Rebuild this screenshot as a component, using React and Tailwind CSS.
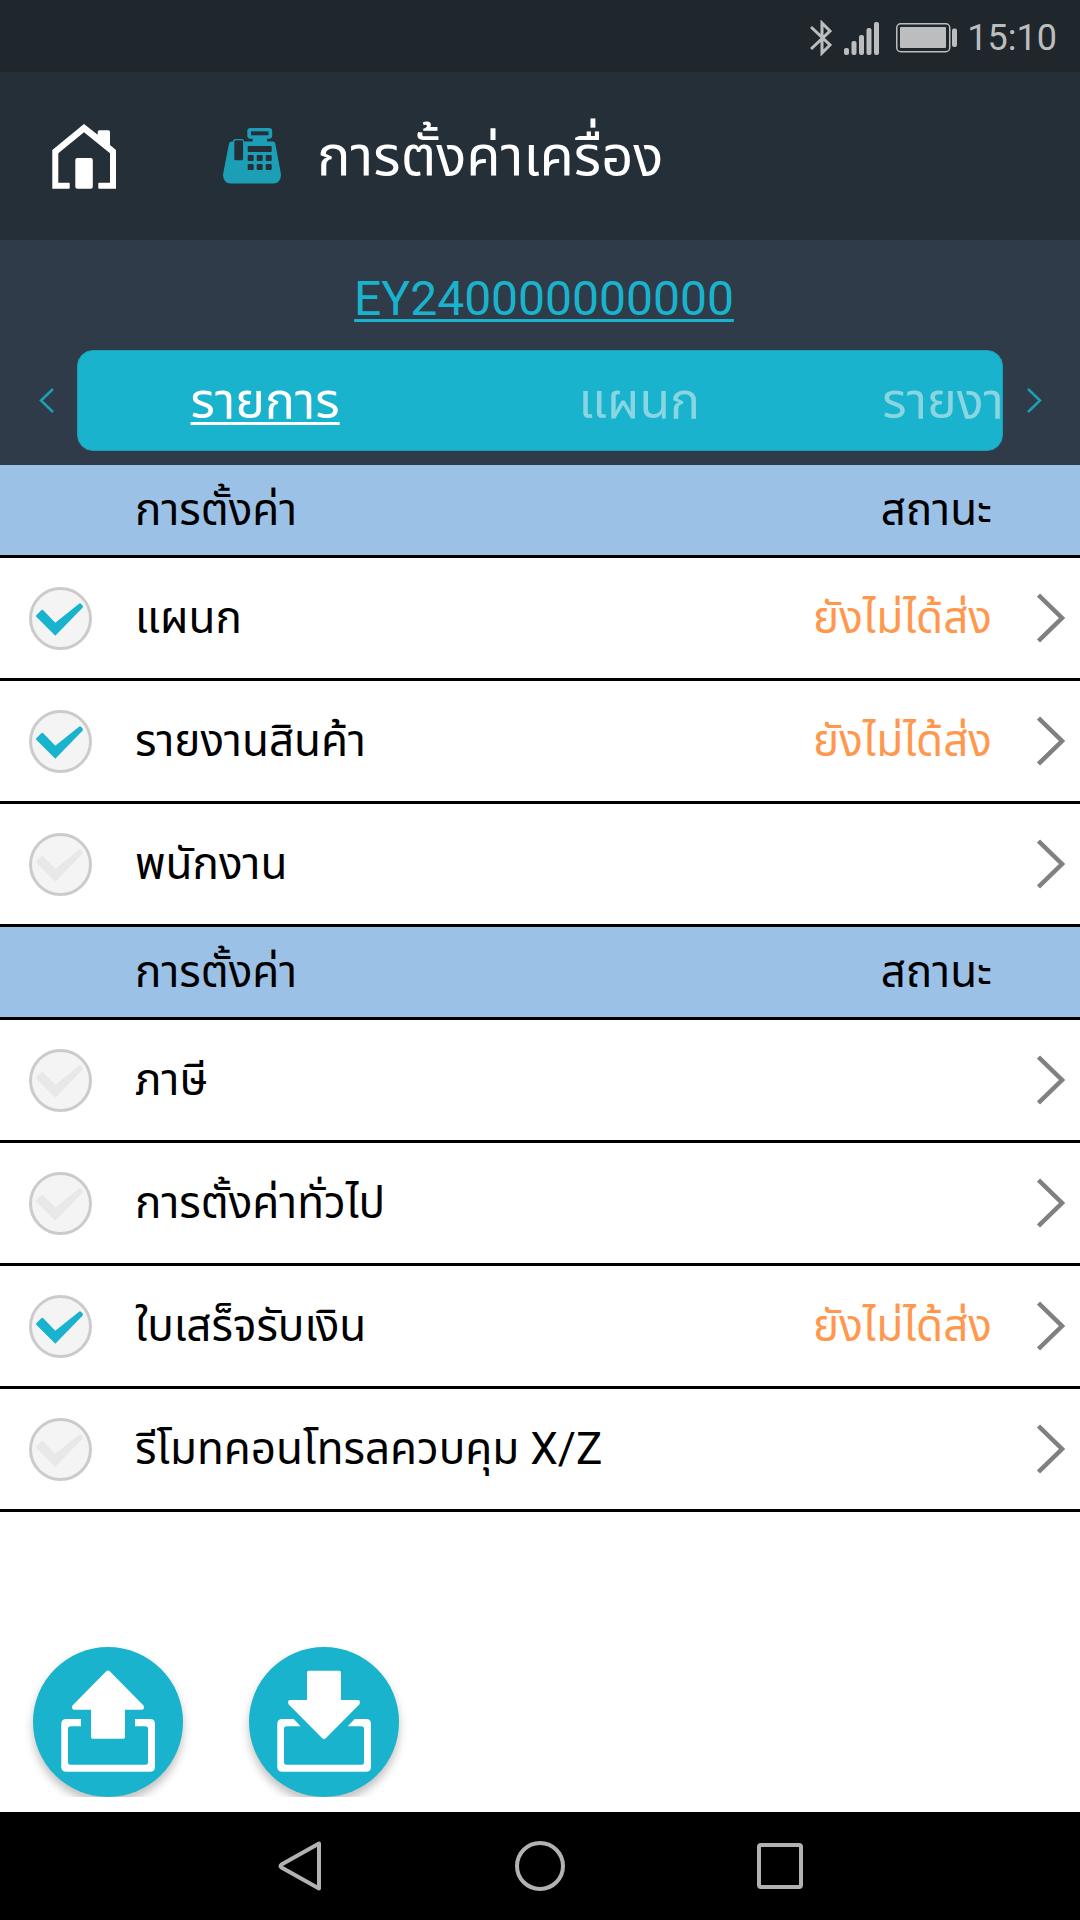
import React, { useState } from 'react';

const sections = [
    {
        id: 'menu',
        rows: [
            { id: 'department', label: 'แผนก', checked: true },
            { id: 'plu', label: 'รายงานสินค้า', checked: true },
            { id: 'clerk', label: 'พนักงาน', checked: false },
        ],
    },
    {
        id: 'system',
        rows: [
            { id: 'tax', label: 'ภาษี', checked: false },
            { id: 'general', label: 'การตั้งค่าทั่วไป', checked: false },
            { id: 'receipt', label: 'ใบเสร็จรับเงิน', checked: true },
            { id: 'remote', label: 'รีโมทคอนโทรลควบคุม X/Z', checked: false },
        ],
    },
];

const tabs = ['รายการ', 'แผนก', 'รายงานสินค้า'];


function StatusBar() {
    return (
        <div className="flex h-18 items-center justify-end bg-[#1f272d] pt-[3px] pr-[23px] text-[#bcbdbf]">
            <svg className="h-9 w-[22px]" viewBox="0 0 22 36" fill="none" stroke="currentColor" strokeWidth="3">
                <path d="M1 7l19 18-8 8V3l8 8L1 29" strokeLinejoin="miter" />
            </svg>
            <svg className="ml-3 h-9 w-9" viewBox="0 0 36 36" fill="currentColor">
                <rect x="0" y="28" width="5" height="7" rx="2" />
                <rect x="7.5" y="21" width="5" height="14" rx="2" />
                <rect x="15" y="15" width="5" height="20" rx="2" />
                <rect x="22.5" y="8" width="5" height="27" rx="2" />
                <rect x="30" y="2" width="5" height="33" rx="2" />
            </svg>
            <svg className="ml-4 h-[30px] w-[62px]" viewBox="0 0 62 30" fill="currentColor">
                <rect x="0.75" y="0.75" width="53" height="28" rx="4" fill="none" stroke="currentColor" strokeWidth="1.5" />
                <rect x="4" y="4" width="46" height="21" rx="1" />
                <rect x="56" y="5.5" width="5" height="18.5" rx="2" />
            </svg>
            <span className="ml-[9px] text-[36px] leading-none">15:10</span>
        </div>
    );
}

function HomeIcon() {
    return (
        <svg className="h-[65px] w-16" viewBox="0 0 64 65" fill="currentColor">
            <path d="M32 0L45.7 10.8V8q0-1.7 1.7-1.7H56.3q1.7 0 1.7 1.7V21L64 26V64.7H47q-.7 0-.7-.7V59.4q0-.7.7-.7H58V29.3L32 8.3 6.3 29.3V58.7H17q.7 0 .7.7V64q0 .7-.7.7H.3V26z" />
            <rect x="23.3" y="34" width="17.5" height="30.7" rx="2" />
        </svg>
    );
}

function RegisterIcon() {
    return (
        <svg className="h-14 w-[58px]" viewBox="0 0 58 56">
            <g fill="#1c9fb6">
                <path d="M9 13.5H29.7V10.7H27.5q-3.2 0-3.2-3.2V3.2q0-3.2 3.2-3.2H46q3.2 0 3.2 3.2V7.5q0 3.2-3.2 3.2H44V13.5H50q2 0 2.3 2L58 46.5q0 9-8 9H8q-8 0-8-9L6 15.5q.5-2 3-2z" />
                <rect x="10" y="11" width="11" height="10" rx="2.5" />
            </g>
            <g fill="#252f38">
                <rect x="28" y="3.3" width="17.5" height="4" />
                <rect x="11.3" y="12.3" width="8.8" height="20" rx="1.5" />
                <rect x="24.7" y="18" width="24" height="6" rx="1" />
                <rect x="24.7" y="27" width="6" height="6" rx="1" />
                <rect x="33.7" y="27" width="6" height="6" rx="1" />
                <rect x="42.7" y="27" width="6" height="6" rx="1" />
                <rect x="24.7" y="36" width="6" height="6" rx="1" />
                <rect x="33.7" y="36" width="6" height="6" rx="1" />
                <rect x="42.7" y="36" width="6" height="6" rx="1" />
            </g>
        </svg>
    );
}

function Header() {
    return (
        <header className="flex h-42 items-center bg-[#252f38] pl-13 text-white">
            <button aria-label="หน้าแรก">
                <HomeIcon />
            </button>
            <div className="ml-[107px]">
                <RegisterIcon />
            </div>
            <h1 className="ml-9 text-[56px] leading-none">การตั้งค่าเครื่อง</h1>
        </header>
    );
}

function TabBar() {
    const [active, setActive] = useState(0);

    return (
        <nav className="flex items-center text-[#1c9fb6]">
            <button aria-label="ก่อนหน้า" className="flex w-[77px] justify-center pl-4">
                <svg className="h-[25px] w-4" viewBox="0 0 16 25" fill="none" stroke="currentColor" strokeWidth="2.5">
                    <path d="M14 1L2 12.5 14 24" />
                </svg>
            </button>
            <div className="flex h-[101px] min-w-0 flex-1 overflow-hidden rounded-2xl border border-[#1c9fb6] bg-[#1ab3cd]">
                {tabs.map((tab, i) => (
                    <button
                        key={tab}
                        onClick={() => setActive(i)}
                        className={
                            i === active
                                ? 'shrink-0 basis-[40.5%] text-center text-[50px] leading-none whitespace-nowrap text-white underline decoration-3 underline-offset-4'
                                : 'shrink-0 basis-[40.5%] text-center text-[50px] leading-none whitespace-nowrap text-[#8ad5e2]'
                        }
                    >
                        {tab}
                    </button>
                ))}
            </div>
            <button aria-label="ถัดไป" className="flex w-[77px] justify-center pr-4">
                <svg className="h-[25px] w-4" viewBox="0 0 16 25" fill="none" stroke="currentColor" strokeWidth="2.5">
                    <path d="M2 1l12 11.5L2 24" />
                </svg>
            </button>
        </nav>
    );
}

function SettingRow({ row }) {
    const [checked, setChecked] = useState(row.checked);

    return (
        <tr className="h-[123px]">
            <td className="w-[135px] border-b-3 border-black pl-[29px]">
                <div className="relative h-[63px] w-[63px]">
                    <input
                        id={row.id}
                        type="checkbox"
                        checked={checked}
                        onChange={() => setChecked(!checked)}
                        className="peer block h-[63px] w-[63px] appearance-none rounded-full border-3 border-[#cbcbcb] bg-[#f4f4f4]"
                    />
                    <svg
                        className="pointer-events-none absolute inset-0 h-[63px] w-[63px] text-[#e8e8e8] peer-checked:text-[#1ab3cd]"
                        viewBox="0 0 63 63"
                        fill="currentColor"
                    >
                        <path d="M7.3 28.3L12.3 23.3q1-1 2 0L26.3 35.7 50 16.8q1.2-1 2.2.2l1.5 1.8q.8 1-.2 2L26.3 48.7 7.3 29.8q-.7-.7 0-1.5z" />
                    </svg>
                </div>
            </td>
            <td className="border-b-3 border-black">
                <label htmlFor={row.id}>{row.label}</label>
            </td>
            <td className="border-b-3 border-black text-right text-[#ff984d]">
                {checked && 'ยังไม่ได้ส่ง'}
            </td>
            <td className="w-22 border-b-3 border-black pr-[15px]">
                <button aria-label={row.label} className="ml-auto block">
                    <svg className="h-[50px] w-7" viewBox="0 0 28 50" fill="none" stroke="#808080" strokeWidth="4.5">
                        <path d="M1.5 2L25 25 1.5 48" />
                    </svg>
                </button>
            </td>
        </tr>
    );
}

function FloatingButton({ label, children }) {
    return (
        <button aria-label={label} className="h-[150px] w-[150px] rounded-full bg-[#1ab3cd] shadow-[0_6px_10px_rgba(0,0,0,0.25)]">
            <svg viewBox="0 0 150 150" fill="white">
                {children}
            </svg>
        </button>
    );
}

function NavBar() {
    return (
        <footer className="h-27 bg-black px-[16.666%]">
            <div className="grid h-full grid-cols-3 place-items-center text-[#b2b2b2]">
                <button aria-label="ย้อนกลับ">
                    <svg className="h-[50px] w-11" viewBox="0 0 44 50" fill="none" stroke="currentColor" strokeWidth="4" strokeLinejoin="round">
                        <path d="M41 2.5V47.5L3.5 26.5q-2-1.5 0-3z" />
                    </svg>
                </button>
                <button aria-label="โฮม" className="h-[50px] w-[50px] rounded-full border-4 border-[#b2b2b2]" />
                <button aria-label="แอปล่าสุด" className="h-[46px] w-[46px] rounded-sm border-4 border-[#b2b2b2]" />
            </div>
        </footer>
    );
}

function App() {
    return (
        <div lang="th" className="flex min-h-screen flex-col bg-white font-[Roboto,'Noto_Sans_Thai','Noto_Sans',sans-serif] text-black">
            <StatusBar />
            <Header />

            <div className="bg-[#2f3b48] pb-[14px]">
                <div className="flex h-[110px] items-center justify-center pt-2 pl-2">
                    <a href="#" className="text-[48px] leading-none text-[#1ab3cd] underline decoration-3 underline-offset-4">
                        EY240000000000
                    </a>
                </div>
                <TabBar />
            </div>

            <main className="flex flex-1 flex-col">
                <table className="w-full border-separate border-spacing-0 text-[44px] leading-none">
                    {sections.map((section) => (
                        <tbody key={section.id}>
                            <tr className="h-[93px] bg-[#9bc1e6] text-left">
                                <td className="border-b-3 border-black" />
                                <th className="border-b-3 border-black font-normal">การตั้งค่า</th>
                                <th className="border-b-3 border-black text-right font-normal">สถานะ</th>
                                <td className="border-b-3 border-black" />
                            </tr>
                            {section.rows.map((row) => (
                                <SettingRow key={row.id} row={row} />
                            ))}
                        </tbody>
                    ))}
                </table>

                <div className="mt-auto mb-[15px] flex gap-[66px] overflow-hidden pt-4 pl-[33px]">
                    <FloatingButton label="ส่ง">
                        <path d="M73 24.5q2-1.8 4 0L110.5 58.5q1.5 4.2-2 4.2H92V90q0 1.7-1.7 1.7H59.7Q58 91.7 58 90V62.7H41.5q-3.5 0-2-4.2z" />
                        <path d="M48 72V79.3H37.5Q35 79.3 35 82V115q0 2.7 2.5 2.7H112.5Q115 117.7 115 115V82q0-2.7-2.5-2.7H102V72H117q5 0 5 5V119.7q0 5-5 5H33.3q-5 0-5-5V77q0-5 5-5z" />
                    </FloatingButton>
                    <FloatingButton label="รับ">
                        <path d="M73 91q2 1.8 4 0L110.5 57.2q1.5-4.2-2-4.2H92V25.4q0-1.7-1.7-1.7H59.7Q58 23.7 58 25.4V53H41.5q-3.5 0-2 4.2z" />
                        <path d="M44.7 72L51.5 79.3H37.5Q35 79.3 35 82V115q0 2.7 2.5 2.7H112.5Q115 117.7 115 115V82q0-2.7-2.5-2.7H98.7L105.7 72H117q5 0 5 5V119.7q0 5-5 5H33.3q-5 0-5-5V77q0-5 5-5z" />
                    </FloatingButton>
                </div>
            </main>

            <NavBar />
        </div>
    );
}

export default App;
